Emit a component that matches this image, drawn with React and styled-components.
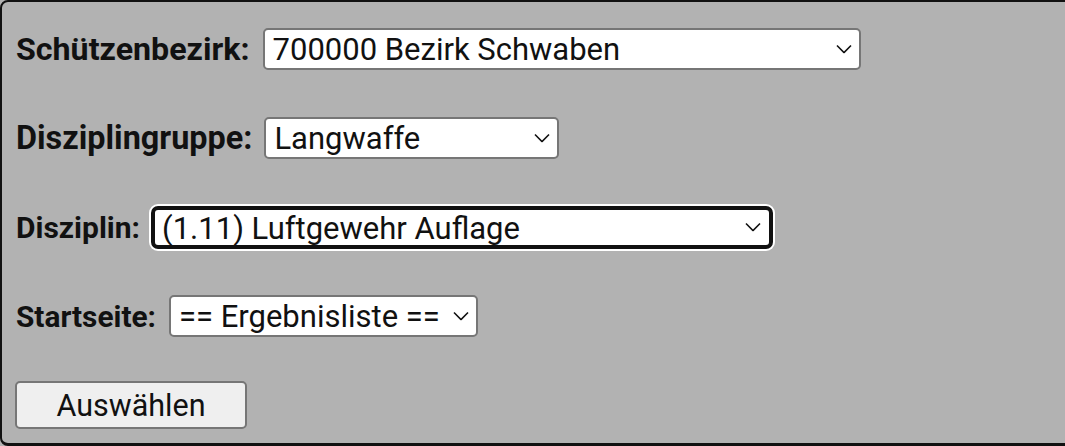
import React from 'react'
import styled, { createGlobalStyle } from 'styled-components'

const GlobalStyle = createGlobalStyle`
  html, body {
    margin: 0;
    padding: 0;
    overflow: hidden;
    background: #b2b2b2;
    font-family: Roboto, "Noto Sans", sans-serif;
  }
`;

const Panel = styled.form`
  box-sizing: border-box;
  width: 1075px;
  height: 446px;
  border: 2px solid #111;
  border-bottom-width: 3px;
  border-radius: 8px;
  background: #b2b2b2;
  padding: 26px 0 0 14px;
  display: flex;
  flex-direction: column;
  gap: 47px;
`;

const Row = styled.div`
  display: flex;
  align-items: center;
  gap: ${({ gap }) => gap || 13}px;
  height: 42px;
`;

const Label = styled.label`
  font-weight: 700;
  font-size: ${({ size }) => size}px;
  color: #111;
  white-space: nowrap;
`;

const SelectWrap = styled.div`
  position: relative;
  width: ${({ width }) => width}px;
  height: ${({ focused }) => (focused ? 43 : 42)}px;
`;

const Select = styled.select`
  appearance: none;
  box-sizing: border-box;
  width: 100%;
  height: 100%;
  margin: 0;
  padding: 0 28px 0 ${({ focused }) => (focused ? 7 : 8)}px;
  font-family: Roboto, "Noto Sans", sans-serif;
  font-size: 31px;
  color: #111;
  background: #fff;
  border: ${({ focused }) => (focused ? '4px solid #111' : '2px solid #767676')};
  border-radius: ${({ focused }) => (focused ? 7 : 5)}px;
  box-shadow: ${({ focused }) => (focused ? '0 0 0 2px #fff' : 'none')};
  outline: none;
`;

const Chevron = styled.svg`
  position: absolute;
  right: ${({ focused }) => (focused ? 12 : 9)}px;
  top: 50%;
  transform: translateY(-50%);
  pointer-events: none;
`;

const Button = styled.button`
  box-sizing: border-box;
  width: 232px;
  height: 48px;
  margin: -3px 0 0 -1px;
  background: #efefef;
  border: 2px solid #767676;
  border-radius: 5px;
  font-family: Roboto, "Noto Sans", sans-serif;
  font-size: 30.5px;
  color: #111;
  padding: 0;
`;

function Dropdown({ width, value, focused }) {
  return (
    <SelectWrap width={width} focused={focused}>
      <Select focused={focused} defaultValue={value}>
        <option>{value}</option>
      </Select>
      <Chevron focused={focused} width="16" height="9" viewBox="0 0 16 9">
        <path d="M1 1 L8 8 L15 1" fill="none" stroke="#111" strokeWidth="1.6" />
      </Chevron>
    </SelectWrap>
  );
}

export default function App() {
  return (
    <>
      <GlobalStyle />
      <Panel>
        <Row>
          <Label size={32.2}>Schützenbezirk:</Label>
          <Dropdown width={598} value="700000 Bezirk Schwaben" />
        </Row>
        <Row gap={12}>
          <Label size={32.4}>Disziplingruppe:</Label>
          <Dropdown width={295} value="Langwaffe" />
        </Row>
        <Row gap={11}>
          <Label size={30}>Disziplin:</Label>
          <Dropdown width={622} value="(1.11) Luftgewehr Auflage" focused />
        </Row>
        <Row gap={13}>
          <Label size={29.8}>Startseite:</Label>
          <Dropdown width={309} value="== Ergebnisliste ==" />
        </Row>
        <Button type="button">Auswählen</Button>
      </Panel>
    </>
  );
}
